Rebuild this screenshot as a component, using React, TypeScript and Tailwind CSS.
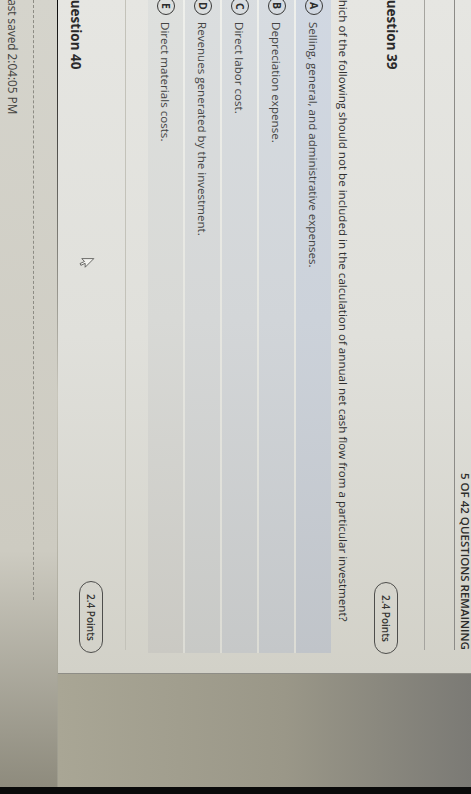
import React from "react";

const options = [
  { l: "A", t: "Selling, general, and administrative expenses.", bg: "bg-linear-to-b from-[#d1d8e2] via-[#ccd2da] to-[#c0c4c9]" },
  { l: "B", t: "Depreciation expense.", bg: "bg-linear-to-b from-[#d7dce1] via-[#d1d5d9] to-[#c4c7c9]" },
  { l: "C", t: "Direct labor cost.", bg: "bg-linear-to-b from-[#d9dde0] via-[#d3d6d8] to-[#c6c8c8]" },
  { l: "D", t: "Revenues generated by the investment.", bg: "bg-linear-to-b from-[#dbdedf] via-[#d5d7d7] to-[#c8c9c6]" },
  { l: "E", t: "Direct materials costs.", bg: "bg-linear-to-b from-[#dee0de] via-[#d8d9d6] to-[#cac9c3]" },
];

function Pill({ className }: { className: string }) {
  return (
    <div
      className={
        "shrink-0 w-[24px] h-[72px] rounded-full border-[1.5px] border-[#4e4e4c] flex items-center justify-center text-[10px] font-semibold leading-none text-[#343432] whitespace-nowrap " +
        className
      }
    >
      2.4 Points
    </div>
  );
}

export default function App() {
  return (
    <div className="relative w-[471px] h-[794px] overflow-hidden bg-[#0a0a0a] font-['Open_Sans','DejaVu_Sans',sans-serif]">
      <div className="flex h-[787px] w-full">
        {/* footer strip */}
        <div className="w-[57px] h-full shrink-0 overflow-hidden bg-linear-to-b from-[#d5d4cc] via-[#cdcbc1] via-70% to-[#8e8b7d]">
          <div className="[writing-mode:vertical-rl] w-[57px] h-[794px] -mt-[7px] flex flex-col">
            <div className="shrink-0 w-0 h-[600px] mt-[7px] mr-[23px] border-l border-dashed border-[#8d8c84]" />
            <div className="shrink-0 w-[15px] mr-[13px] leading-[15px] text-[11.8px] text-[#43423e] whitespace-nowrap">
              Last saved 2:04:05 PM
            </div>
          </div>
        </div>
        <div className="w-px h-full shrink-0 bg-linear-to-b from-transparent via-[#c8c6bb] to-[#9c9a8c]" />

        {/* main */}
        <div className="flex-1 min-w-0 flex flex-col">
          <div className="h-[673px] overflow-hidden bg-linear-to-b from-[#e6e6e2] via-[#e0e0db] to-[#d2d1c8]">
            <div className="[writing-mode:vertical-rl] w-full h-[684px] -mt-[11px] flex flex-col">
              <div className="shrink-0 w-[16px] h-[661px] -mr-[2px] leading-[16px] text-[11.5px] font-semibold text-end text-[#2b2b29] whitespace-nowrap">
                5 OF 42 QUESTIONS REMAINING
              </div>
              <div className="shrink-0 w-px h-[661px] mr-[2px] bg-[#8c8b87]" />
              <div className="shrink-0 w-px h-[661px] mr-[29px] bg-[#a5a49f]" />

              <div className="shrink-0 w-[27px] h-[665px] mr-[23px] flex justify-between">
                <div className="self-start leading-[18px] text-[13.5px] font-bold text-[#2a2a2a] whitespace-nowrap">
                  Question 39
                </div>
                <Pill className="self-end" />
              </div>

              <div className="shrink-0 w-[19px] mr-[21px] leading-[19px] text-[11.6px] text-[#2f2f2f] whitespace-nowrap">
                Which of the following should not be included in the calculation of annual net cash flow from a particular investment?
              </div>

              <div className="shrink-0 h-[664px] mr-[3px] flex flex-col gap-[2px] bg-linear-to-b from-[#eff0ec] to-[#dcdcd5]">
                {options.map((o) => (
                  <div key={o.l} className={"shrink-0 w-[35px] h-full flex items-center gap-[7px] pt-[8px] " + o.bg}>
                    <div className="shrink-0 w-[18px] h-[18px] rounded-full border-[1.5px] border-[#393938] flex items-center justify-center text-[10.5px] font-bold leading-none text-[#2c2c2c]">
                      {o.l}
                    </div>
                    <div className="leading-[15px] text-[11.6px] text-[#444443] whitespace-nowrap">{o.t}</div>
                  </div>
                ))}
              </div>

              <div className="shrink-0 w-px h-[661px] mr-[22px] bg-[#c3c2b9]" />

              <div className="shrink-0 w-[36px] h-[664px] mr-[22px] flex justify-between">
                <div className="self-end leading-[18px] text-[13.5px] font-bold text-[#2a2a2a] whitespace-nowrap">
                  Question 40
                </div>
                <Pill className="self-start" />
              </div>
            </div>
          </div>
          <div className="h-px shrink-0 bg-[#8e8d86]" />
          <div className="flex-1 bg-linear-to-r from-[#a9a695] via-[#9a9788] via-55% to-[#7b7a75]" />
        </div>
      </div>

      {/* mouse pointer */}
      <svg width="16" height="12" viewBox="0 0 20 13" className="absolute left-[79px] top-[257px]">
        <g transform="translate(19.5 0) rotate(90)">
          <path
            d="M1 1 L1 16 L4.6 12.6 L7.2 18.2 L9.4 17.2 L6.9 11.8 L11.8 11.8 Z"
            fill="#f3f3ef"
            stroke="#4a4a47"
            strokeWidth="1"
            strokeLinejoin="round"
          />
        </g>
      </svg>
    </div>
  );
}
